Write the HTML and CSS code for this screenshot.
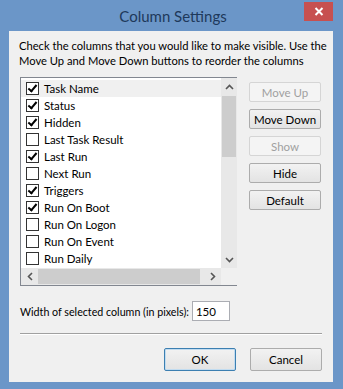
FILE: index.html
```html
<!DOCTYPE html>
<html lang="en">
  <head>
    <meta charset="UTF-8" />
    <title>Column Settings</title>
    <link rel="stylesheet" href="styles.css">
  </head>
  <body>
    <div class="window">
      <div class="titlebar">
        <span class="title">Column Settings</span>
        <span class="close">
          <svg width="10" height="9" viewBox="0 0 10 9"><path d="M1.5 1 L8.5 8 M8.5 1 L1.5 8" stroke="#fff" stroke-width="2"/></svg>
        </span>
      </div>
      <div class="client">
        <p class="intro">Check the columns that you would like to make visible. Use the<br>Move Up and Move Down buttons to reorder the columns</p>
        <div class="main">
          <div class="listbox">
            <ul class="items">
              <li class="selected"><span class="box on"></span>Task Name</li>
              <li><span class="box on"></span>Status</li>
              <li><span class="box on"></span>Hidden</li>
              <li><span class="box"></span>Last Task Result</li>
              <li><span class="box on"></span>Last Run</li>
              <li><span class="box"></span>Next Run</li>
              <li><span class="box on"></span>Triggers</li>
              <li><span class="box on"></span>Run On Boot</li>
              <li><span class="box"></span>Run On Logon</li>
              <li><span class="box"></span>Run On Event</li>
              <li><span class="box"></span>Run Daily</li>
            </ul>
            <div class="vscroll">
              <span class="arrow">
                <svg width="9" height="6" viewBox="0 0 9 6"><path d="M1 5 L4.5 1.5 L8 5" fill="none" stroke="#555" stroke-width="1.6"/></svg>
              </span>
              <div class="vtrack"><div class="vthumb"></div></div>
              <span class="arrow">
                <svg width="9" height="6" viewBox="0 0 9 6"><path d="M1 1 L4.5 4.5 L8 1" fill="none" stroke="#555" stroke-width="1.6"/></svg>
              </span>
            </div>
            <div class="hscroll">
              <span class="arrow">
                <svg width="6" height="9" viewBox="0 0 6 9"><path d="M5 1 L1.5 4.5 L5 8" fill="none" stroke="#555" stroke-width="1.6"/></svg>
              </span>
              <div class="htrack"><div class="hthumb"></div></div>
              <span class="arrow">
                <svg width="6" height="9" viewBox="0 0 6 9"><path d="M1 1 L4.5 4.5 L1 8" fill="none" stroke="#555" stroke-width="1.6"/></svg>
              </span>
            </div>
            <div class="corner"></div>
          </div>
          <div class="side">
            <button class="btn" disabled>Move Up</button>
            <button class="btn">Move Down</button>
            <button class="btn" disabled>Show</button>
            <button class="btn">Hide</button>
            <button class="btn">Default</button>
          </div>
        </div>
        <div class="width-row">
          <label for="colwidth">Width of selected column (in pixels):</label>
          <input id="colwidth" class="field" type="text" value="150">
        </div>
        <hr class="sep">
        <div class="footer">
          <button class="btn default">OK</button>
          <button class="btn">Cancel</button>
        </div>
      </div>
    </div>
  </body>
</html>
```

FILE: styles.css
```css
html,
body {
  margin: 0;
  padding: 0;
}

body {
  width: 343px;
  height: 389px;
  overflow: hidden;
  font: 11px Lato, "Noto Sans", sans-serif;
  color: #000;
}

.window {
  width: 343px;
  height: 389px;
  box-sizing: border-box;
  background: #6b96c8;
  padding: 0 10px 7px 9px;
  display: flex;
  flex-direction: column;
}

.titlebar {
  height: 31px;
  position: relative;
  display: flex;
  align-items: center;
  justify-content: center;
}
.title {
  font-size: 15px;
  color: #1e395b;
  margin-left: 4px;
}
.close {
  position: absolute;
  right: 0;
  top: 2px;
  width: 29px;
  height: 19px;
  background: #c75050;
  display: flex;
  align-items: center;
  justify-content: center;
}

.client {
  flex: 1;
  background: #f0f0f0;
  padding: 7px 6px 0 10px;
  display: flex;
  flex-direction: column;
}

.intro {
  margin: 0;
  line-height: 15px;
  font-size: 11.2px;
  white-space: nowrap;
}

.main {
  display: flex;
  margin-top: 9px;
  margin-left: 1px;
}

.listbox {
  width: 217px;
  height: 209px;
  box-sizing: border-box;
  border: 1px solid #828790;
  background: #fff;
  display: grid;
  grid-template-columns: 200px 16px;
  grid-template-rows: 190px 17px;
}

.items {
  list-style: none;
  margin: 0;
  padding: 2px 0 0 0;
  overflow: hidden;
}
.items li {
  height: 17px;
  display: flex;
  align-items: center;
  padding-left: 5px;
  white-space: nowrap;
  font-size: 11.5px;
}
.items li.selected {
  background: #f0f0f0;
}

.box {
  width: 11px;
  height: 11px;
  border: 1px solid #333;
  background: #fff;
  margin-right: 5px;
  position: relative;
}
.box.on::after {
  content: "";
  position: absolute;
  left: 3px;
  top: 0px;
  width: 3px;
  height: 7px;
  border: solid #000;
  border-width: 0 2px 2px 0;
  transform: rotate(40deg);
}

.vscroll {
  background: #e8e8e8;
  display: flex;
  flex-direction: column;
}
.vscroll .arrow {
  height: 17px;
  display: flex;
  align-items: center;
  justify-content: center;
}
.vtrack {
  flex: 1;
}
.vthumb {
  height: 61px;
  margin: 1px 1px 0 1px;
  background: #cdcdcd;
}

.hscroll {
  background: #e8e8e8;
  display: flex;
  align-items: stretch;
}
.hscroll .arrow {
  width: 17px;
  display: flex;
  align-items: center;
  justify-content: center;
}
.htrack {
  flex: 1;
}
.hthumb {
  width: 162px;
  height: 15px;
  margin: 1px 0;
  background: #cdcdcd;
}
.corner {
  background: #f0f0f0;
}

.side {
  display: flex;
  flex-direction: column;
  gap: 7px;
  margin-left: 12px;
  margin-top: 5px;
}

.btn {
  width: 72px;
  height: 20px;
  padding: 0;
  font: 11.5px Lato, "Noto Sans", sans-serif;
  color: #000;
  background: linear-gradient(#f2f2f2, #e3e3e3);
  border: 1px solid #acacac;
  border-radius: 2px;
}
.btn:disabled {
  color: #a0a0a0;
  background: #f4f4f4;
  border-color: #d5d5d5;
}
.btn.default {
  border-color: #3c7fb1;
  box-shadow: inset 0 0 0 1px #c2dcf0;
}

.width-row {
  display: flex;
  align-items: center;
  margin-top: 15px;
  margin-left: 1px;
}
.width-row label {
  font-size: 10.7px;
}
.field {
  width: 38px;
  height: 20px;
  box-sizing: border-box;
  margin-left: 3px;
  border: 1px solid #abadb3;
  padding: 0 0 0 3px;
  font: 11.5px Lato, "Noto Sans", sans-serif;
}

.sep {
  margin: 12px 5px 0 1px;
  height: 0;
  border: 0;
  border-top: 1px solid #a0a0a0;
  border-bottom: 1px solid #fff;
}

.footer {
  display: flex;
  justify-content: flex-end;
  gap: 14px;
  margin-top: 13px;
  margin-right: 5px;
}
.footer .btn {
  height: 23px;
}
```
